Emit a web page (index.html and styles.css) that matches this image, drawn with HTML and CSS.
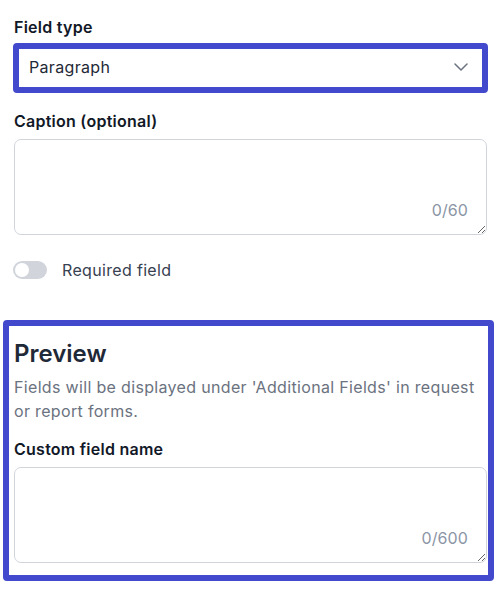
FILE: index.html
```html
<!DOCTYPE html>
<html lang="en">
<head>
<meta charset="utf-8">
<title>Field settings</title>
<link rel="stylesheet" href="styles.css">
</head>
<body>
<div class="page">
  <label class="label label-first">Field type</label>
  <div class="select-ring">
    <div class="select">
      <span class="select-value">Paragraph</span>
      <svg class="chevron" width="14" height="8" viewBox="0 0 14 8"><polyline points="1,1 7,7 13,1" fill="none" stroke="#6b7280" stroke-width="1.5" stroke-linecap="round" stroke-linejoin="round"/></svg>
    </div>
  </div>

  <label class="label label-gap">Caption (optional)</label>
  <div class="area-wrap">
    <textarea class="area"></textarea>
    <span class="counter">0/60</span>
  </div>

  <div class="toggle-row">
    <span class="toggle"><span class="knob"></span></span>
    <span class="toggle-text">Required field</span>
  </div>

  <section class="preview">
    <h2 class="preview-title">Preview</h2>
    <p class="preview-desc">Fields will be displayed under 'Additional Fields' in request or report forms.</p>
    <label class="label label-preview">Custom field name</label>
    <div class="area-wrap">
      <textarea class="area"></textarea>
      <span class="counter">0/600</span>
    </div>
  </section>
</div>
</body>
</html>
```

FILE: styles.css
```css
* { box-sizing: border-box; }
html, body { margin: 0; padding: 0; background: #ffffff; }
body {
  font-family: Inter, "Noto Sans", sans-serif;
  font-size: 16px;
  line-height: 24px;
  letter-spacing: 0.33px;
  color: #111827;
}
.page {
  width: 487px;
  padding: 15px 0 0 14px;
}
.label {
  display: block;
  font-weight: 600;
  font-size: 16px;
  line-height: 24px;
  letter-spacing: 0.25px;
  color: #111827;
}
.label-gap { margin-top: 16px; }
.label-preview { margin-top: 14px; }
.select-ring {
  margin-top: 4px;
  margin-left: -1px;
  width: 475px;
  height: 50px;
  border: 6px solid #4349cc;
  border-radius: 4px;
  background: #ffffff;
}
.select {
  display: flex;
  align-items: center;
  justify-content: space-between;
  height: 100%;
  padding: 5px 14px 7px 10px;
}
.select-value {
  color: #1f2937;
  line-height: 24px;
}
.chevron { display: block; }
.area-wrap {
  position: relative;
  margin-top: 6px;
  width: 473px;
  height: 96px;
}
.area {
  display: block;
  width: 100%;
  height: 100%;
  margin: 0;
  border: 1px solid #d1d5db;
  border-radius: 7px;
  background: #ffffff;
  resize: vertical;
  font-family: inherit;
  font-size: 16px;
  outline: none;
}
.counter {
  position: absolute;
  right: 19px;
  bottom: 13px;
  font-size: 16px;
  line-height: 24px;
  letter-spacing: 0.1px;
  color: #8b95a5;
}
.toggle-row {
  display: flex;
  align-items: center;
  margin-top: 23px;
  height: 24px;
}
.toggle {
  position: relative;
  width: 34px;
  height: 18px;
  border-radius: 9px;
  background: #d1d5db;
  margin-left: -1px;
}
.knob {
  position: absolute;
  left: 2px;
  top: 2px;
  width: 14px;
  height: 14px;
  border-radius: 50%;
  background: #ffffff;
}
.toggle-text {
  margin-left: 15px;
  color: #374151;
}
.preview {
  margin-top: 38px;
  margin-left: -11px;
  width: 491px;
  border: 6px solid #4349cc;
  border-radius: 4px;
  padding: 12px 1px 12px 5px;
}
.preview-title {
  margin: 0;
  font-size: 24px;
  line-height: 32px;
  font-weight: 600;
  letter-spacing: 0;
  color: #1f2937;
}
.preview-desc {
  margin: 5px 0 0 0;
  color: #6b7280;
  line-height: 24px;
}
```
